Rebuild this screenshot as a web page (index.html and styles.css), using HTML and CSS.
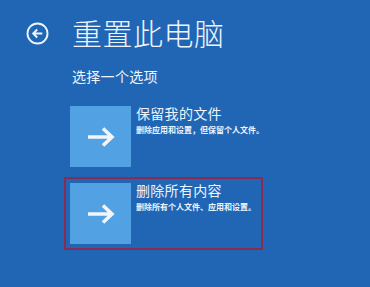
FILE: index.html
```html
<!DOCTYPE html>
<html lang="zh-CN">
<head>
<meta charset="utf-8">
<title>重置此电脑</title>
<link rel="stylesheet" href="styles.css">
</head>
<body>
<div class="page">
  <div class="header">
    <svg class="back" width="23" height="23" viewBox="0 0 23 23">
      <circle cx="11.5" cy="11.5" r="10" fill="none" stroke="#eef4fc" stroke-width="1.9"/>
      <path d="M16.3 11.5 H7.3 M11.2 7.5 L7.2 11.5 L11.2 15.5" fill="none" stroke="#eef4fc" stroke-width="1.9"/>
    </svg>
    <h1 class="title">重置此电脑</h1>
  </div>
  <p class="prompt">选择一个选项</p>
  <div class="options">
    <div class="option">
      <div class="tile">
        <svg width="28" height="22" viewBox="0 0 28 22">
          <path d="M1 11 H25 M16 2.5 L25 11 L16 19.5" fill="none" stroke="#f2f6fb" stroke-width="3.6"/>
        </svg>
      </div>
      <div class="text">
        <div class="opt-title">保留我的文件</div>
        <div class="opt-desc">删除应用和设置，但保留个人文件。</div>
      </div>
    </div>
    <div class="option selected">
      <div class="tile">
        <svg width="28" height="22" viewBox="0 0 28 22">
          <path d="M1 11 H25 M16 2.5 L25 11 L16 19.5" fill="none" stroke="#f2f6fb" stroke-width="3.6"/>
        </svg>
      </div>
      <div class="text">
        <div class="opt-title">删除所有内容</div>
        <div class="opt-desc">删除所有个人文件、应用和设置。</div>
      </div>
    </div>
  </div>
</div>
</body>
</html>
```

FILE: styles.css
```css
html, body {
  margin: 0;
  padding: 0;
}
body {
  background: #2166b5;
  color: #eef4fc;
  font-family: "Noto Sans CJK SC", "Noto Sans", sans-serif;
  width: 370px;
  height: 287px;
  overflow: hidden;
}
.page {
  padding: 17px 0 0 26px;
}
.header {
  display: flex;
  align-items: center;
  gap: 23px;
}
.back {
  display: block;
  margin-top: 2px;
}
.title {
  margin: 0;
  font-size: 30px;
  line-height: 30px;
  font-weight: 300;
  letter-spacing: 0.5px;
}
.prompt {
  margin: 22px 0 0 46px;
  font-size: 14px;
  line-height: 14px;
  letter-spacing: 0.3px;
}
.options {
  margin: 17px 0 0 38px;
  display: flex;
  flex-direction: column;
  gap: 4px;
}
.option {
  box-sizing: border-box;
  width: 199px;
  display: flex;
  gap: 5px;
  padding: 4px;
  border: 2px solid transparent;
}
.option.selected {
  border-color: #8a2b52;
}
.tile {
  width: 61px;
  height: 61px;
  background: #52a1e2;
  display: flex;
  align-items: center;
  justify-content: center;
  flex: none;
}
.tile svg {
  display: block;
}
.text {
  display: flex;
  flex-direction: column;
}
.opt-title {
  font-size: 14px;
  line-height: 14px;
  letter-spacing: 0.3px;
}
.opt-desc {
  margin-top: 6px;
  font-size: 8px;
  line-height: 8px;
  font-weight: 700;
  white-space: nowrap;
}
```
